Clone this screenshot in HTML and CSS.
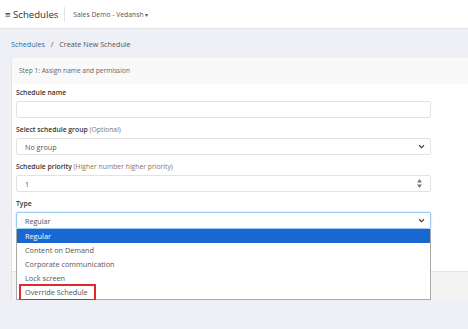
FILE: index.html
```html
<!DOCTYPE html>
<html lang="en">

<head>
    <meta charset="UTF-8">
    <title>Create New Schedule</title>
    <link rel="stylesheet" href="styles.css">
</head>

<body>

    <!-- Top bar -->
    <div class="navbar">
        <span class="brand">&#8801; Schedules</span>
        <span class="divider"></span>
        <span class="account">Sales Demo - Vedansh <span class="caret">&#9662;</span></span>
    </div>

    <div class="breadcrumb">
        <a href="#">Schedules</a>
        <span class="sep">/</span>
        <span>Create New Schedule</span>
    </div>

    <div class="card">
        <div class="card-header">Step 1: Assign name and permission</div>
        <div class="card-body">
            <div class="group">
                <label>Schedule name</label>
                <div class="control"></div>
            </div>
            <div class="group">
                <label>Select schedule group <span class="hint">(Optional)</span></label>
                <div class="control">
                    <span>No group</span>
                    <svg class="chevron" width="7" height="5" viewBox="0 0 7 5"><path d="M1 1.2 L3.5 3.6 L6 1.2" fill="none" stroke="#444" stroke-width="1.2"/></svg>
                </div>
            </div>
            <div class="group">
                <label>Schedule priority <span class="hint">(Higher number higher priority)</span></label>
                <div class="control">
                    <span>1</span>
                    <svg class="spinner" width="7" height="11" viewBox="0 0 7 11"><path d="M1 4.5 L3.5 1 L6 4.5 Z M1 6.5 L3.5 10 L6 6.5 Z" fill="#777"/></svg>
                </div>
            </div>
            <div class="group type-group">
                <label>Type</label>
                <div class="control focused">
                    <span>Regular</span>
                    <svg class="chevron" width="7" height="5" viewBox="0 0 7 5"><path d="M1 1.2 L3.5 3.6 L6 1.2" fill="none" stroke="#444" stroke-width="1.2"/></svg>
                </div>

                <!-- open dropdown -->
                <ul class="options">
                    <li class="selected">Regular</li>
                    <li>Content on Demand</li>
                    <li>Corporate communication</li>
                    <li>Lock screen</li>
                    <li class="marked">Override Schedule</li>
                </ul>
            </div>
        </div>
        <div class="card-footer"></div>
    </div>

</body>

</html>
```

FILE: styles.css
```css
/* General Styles */
body {
    margin: 0;
    background: #eff0f5;
    font-family: "Open Sans", "Liberation Sans", sans-serif;
    color: #555;
}

/* Top bar */
.navbar {
    height: 28px;
    background: #ffffff;
    border-bottom: 1px solid #e2e3e8;
    display: flex;
    align-items: center;
    padding-left: 5px;
}

.brand {
    font-size: 9.6px;
    color: #333;
}

.divider {
    width: 1px;
    height: 15px;
    background: #e3e3e3;
    margin: 0 8px 0 6px;
}

.account {
    font-size: 6.8px;
    color: #555;
}

.caret {
    font-size: 6px;
}

/* Breadcrumb */
.breadcrumb {
    font-size: 7.2px;
    padding: 9px 11px 8px;
    line-height: 12px;
    color: #555;
}

.breadcrumb a {
    color: #2f6aa0;
    text-decoration: none;
}

.breadcrumb .sep {
    margin: 0 4px;
}

/* Card */
.card {
    margin-left: 11px;
    background: #ffffff;
    border-left: 1px solid #e4e4e4;
}

.card-header {
    height: 26px;
    line-height: 26px;
    background: #f9f9f9;
    padding-left: 7px;
    font-size: 6.6px;
    color: #666;
}

.card-body {
    padding: 3px 0 0 4px;
    height: 184px;
}

.group {
    margin-bottom: 6px;
}

label {
    display: block;
    font-size: 6.8px;
    font-weight: 600;
    line-height: 12px;
    color: #333;
    margin-bottom: 2px;
}

.hint {
    font-weight: 400;
    color: #8a7560;
}

.control {
    width: 415px;
    height: 17px;
    box-sizing: border-box;
    border: 1px solid #e2e2e2;
    border-radius: 2px;
    display: flex;
    align-items: center;
    justify-content: space-between;
    padding: 0 5px 0 8px;
    font-size: 7.2px;
    color: #555;
}

.control.focused {
    border-color: #9ccbf5;
    box-shadow: 0 0 2px rgba(102, 175, 233, 0.6);
}

.spinner {
    margin-right: 2px;
}

/* Dropdown list */
.type-group {
    position: relative;
}

.options {
    position: absolute;
    left: 0;
    top: 31px;
    width: 415px;
    box-sizing: border-box;
    margin: 0;
    padding: 0;
    list-style: none;
    background: #ffffff;
    border: 1px solid #a8a8a8;
    border-top: none;
    z-index: 2;
}

.options li {
    height: 14px;
    line-height: 14px;
    font-size: 7.3px;
    padding-left: 8px;
    color: #555;
}

.options li.selected {
    background: #1967d2;
    color: #ffffff;
}

.options li.marked {
    position: relative;
}

.options li.marked::after {
    content: "";
    position: absolute;
    left: 2px;
    top: -1px;
    width: 73px;
    height: 13px;
    border: 2px solid #e2262c;
}

/* Footer */
.card-footer {
    height: 28px;
    background: #f4f4f4;
    border-top: 1px solid #e4e4e4;
}
```
